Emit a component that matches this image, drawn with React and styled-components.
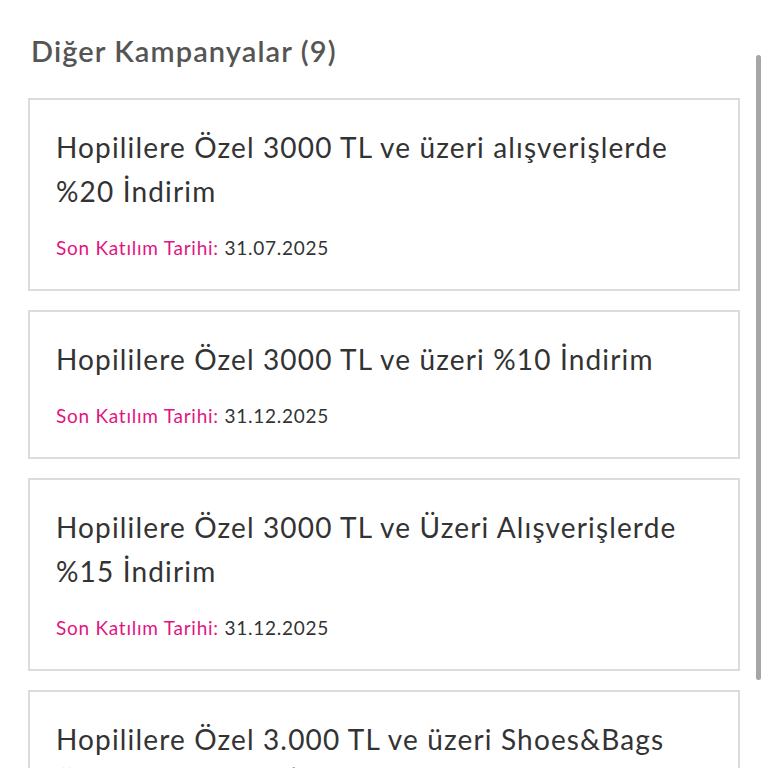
import React from 'react';
import styled, { createGlobalStyle } from 'styled-components';

const GlobalStyle = createGlobalStyle`
  html, body {
    margin: 0;
    padding: 0;
    background: #fff;
    overflow: hidden;
  }
  body {
    font-family: Lato, "Noto Sans", sans-serif;
  }
`;

const campaigns = [
  { title: 'Hopililere Özel 3000 TL ve üzeri alışverişlerde %20 İndirim', date: '31.07.2025' },
  { title: 'Hopililere Özel 3000 TL ve üzeri %10 İndirim', date: '31.12.2025' },
  { title: 'Hopililere Özel 3000 TL ve Üzeri Alışverişlerde %15 İndirim', date: '31.12.2025' },
  { title: 'Hopililere Özel 3.000 TL ve üzeri Shoes&Bags Ürünlerinde %10 İndirim', date: '31.12.2025' },
];

const App = () => {
  return (
    <>
      <GlobalStyle />
      <Page>
        <Heading>Diğer Kampanyalar (9)</Heading>
        <List>
          {campaigns.map((c, i) => (
            <Card key={i}>
              <Title>{c.title}</Title>
              <DateLine>
                <Label>Son Katılım Tarihi:</Label> {c.date}
              </DateLine>
            </Card>
          ))}
        </List>
      </Page>
      <ScrollThumb />
    </>
  );
};

export default App;

const Page = styled.div`
  padding: 33px 28px 0 28px;
  height: 768px;
  box-sizing: border-box;
  overflow: hidden;
`;

const Heading = styled.h2`
  margin: 0 0 29px 3px;
  font-size: 29px;
  line-height: 36px;
  font-weight: 600;
  letter-spacing: 1.1px;
  color: #555;
`;

const List = styled.ul`
  list-style: none;
  margin: 0;
  padding: 0;
  display: flex;
  flex-direction: column;
  gap: 19px;
`;

const Card = styled.li`
  border: 2px solid #dcdcdc;
  padding: 25px 40px 29px 26px;
`;

const Title = styled.h3`
  margin: 0;
  font-size: 28px;
  line-height: 44px;
  font-weight: 400;
  letter-spacing: 1.15px;
  color: #333;
`;

const DateLine = styled.p`
  margin: 23px 0 0;
  font-size: 19px;
  line-height: 24px;
  letter-spacing: 0.75px;
  color: #333;
`;

const Label = styled.span`
  color: #e2157f;
`;

const ScrollThumb = styled.div`
  position: fixed;
  top: 55px;
  right: 7px;
  width: 5px;
  height: 625px;
  border-radius: 3px;
  background: #a6a6a6;
`;
